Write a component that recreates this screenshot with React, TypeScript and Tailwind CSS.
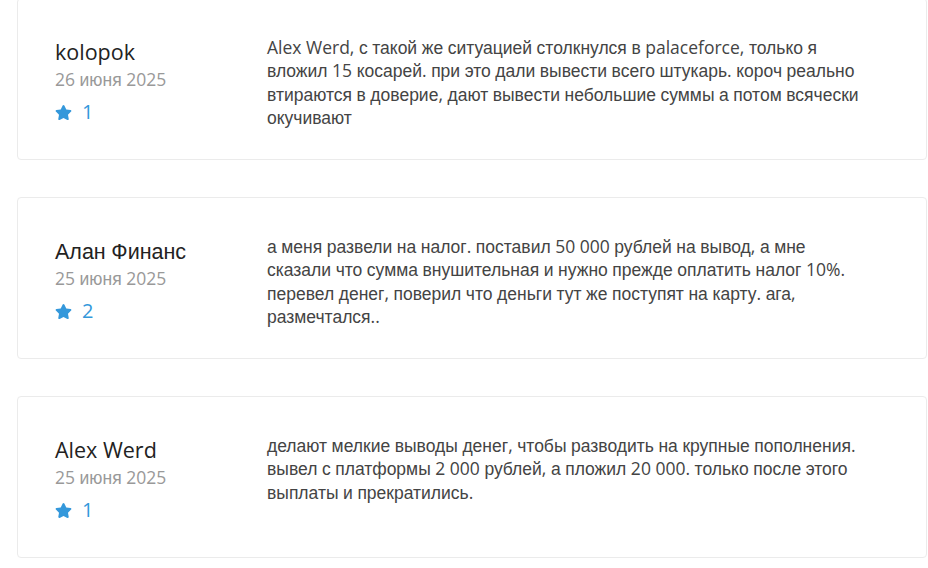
import { FaStar } from "react-icons/fa"

interface Review {
  author: string
  date: string
  likes: number
  text: string
}

const reviews: Review[] = [
  {
    author: "kolopok",
    date: "26 июня 2025",
    likes: 1,
    text: "Alex Werd, с такой же ситуацией столкнулся в palaceforce, только я вложил 15 косарей. при это дали вывести всего штукарь. короч реально втираются в доверие, дают вывести небольшие суммы а потом всячески окучивают",
  },
  {
    author: "Алан Финанс",
    date: "25 июня 2025",
    likes: 2,
    text: "а меня развели на налог. поставил 50 000 рублей на вывод, а мне сказали что сумма внушительная и нужно прежде оплатить налог 10%. перевел денег, поверил что деньги тут же поступят на карту. ага, размечтался..",
  },
  {
    author: "Alex Werd",
    date: "25 июня 2025",
    likes: 1,
    text: "делают мелкие выводы денег, чтобы разводить на крупные пополнения. вывел с платформы 2 000 рублей, а пложил 20 000. только после этого выплаты и прекратились.",
  },
]

// latin runs stay in Open Sans, cyrillic falls back to an Arial-like face
const Mixed = ({ text }: { text: string }) => (
  <>
    {text.split(/([\u0400-\u04FF]+)/).map((part, i) =>
      /[\u0400-\u04FF]/.test(part) ? (
        <span
          key={i}
          className="font-['Liberation_Sans',sans-serif] leading-[0px]"
        >
          {part}
        </span>
      ) : (
        part
      )
    )}
  </>
)

const ReviewCard = ({ review }: { review: Review }) => (
  <div className="mb-[37px] flex h-[162px] w-[910px] rounded-[4px] border border-[#ebebeb] bg-white pl-[37px]">
    <div className="w-[212px] shrink-0 pt-[39px]">
      <div className="text-[21.5px] leading-[28px] text-[#222]">
        <Mixed text={review.author} />
      </div>
      <div className="mt-px text-[17.5px] leading-[24px] text-[#999]">
        <Mixed text={review.date} />
      </div>
      <div className="mt-[9px] flex items-center gap-[10px] text-[#3498db]">
        <FaStar className="size-[17px]" />
        <span className="text-[20px] leading-[24px]">{review.likes}</span>
      </div>
    </div>
    <p className="w-[605px] pt-[37px] text-[17.5px] leading-[23.3px] text-[#444]">
      <Mixed text={review.text} />
    </p>
  </div>
)

export default function App() {
  return (
    <div className="min-h-[568px] bg-white font-['Open_Sans',sans-serif]">
      <div className="mt-[-2px] pl-[17px]">
        {reviews.map((r, idx) => (
          <ReviewCard key={idx} review={r} />
        ))}
      </div>
    </div>
  )
}
